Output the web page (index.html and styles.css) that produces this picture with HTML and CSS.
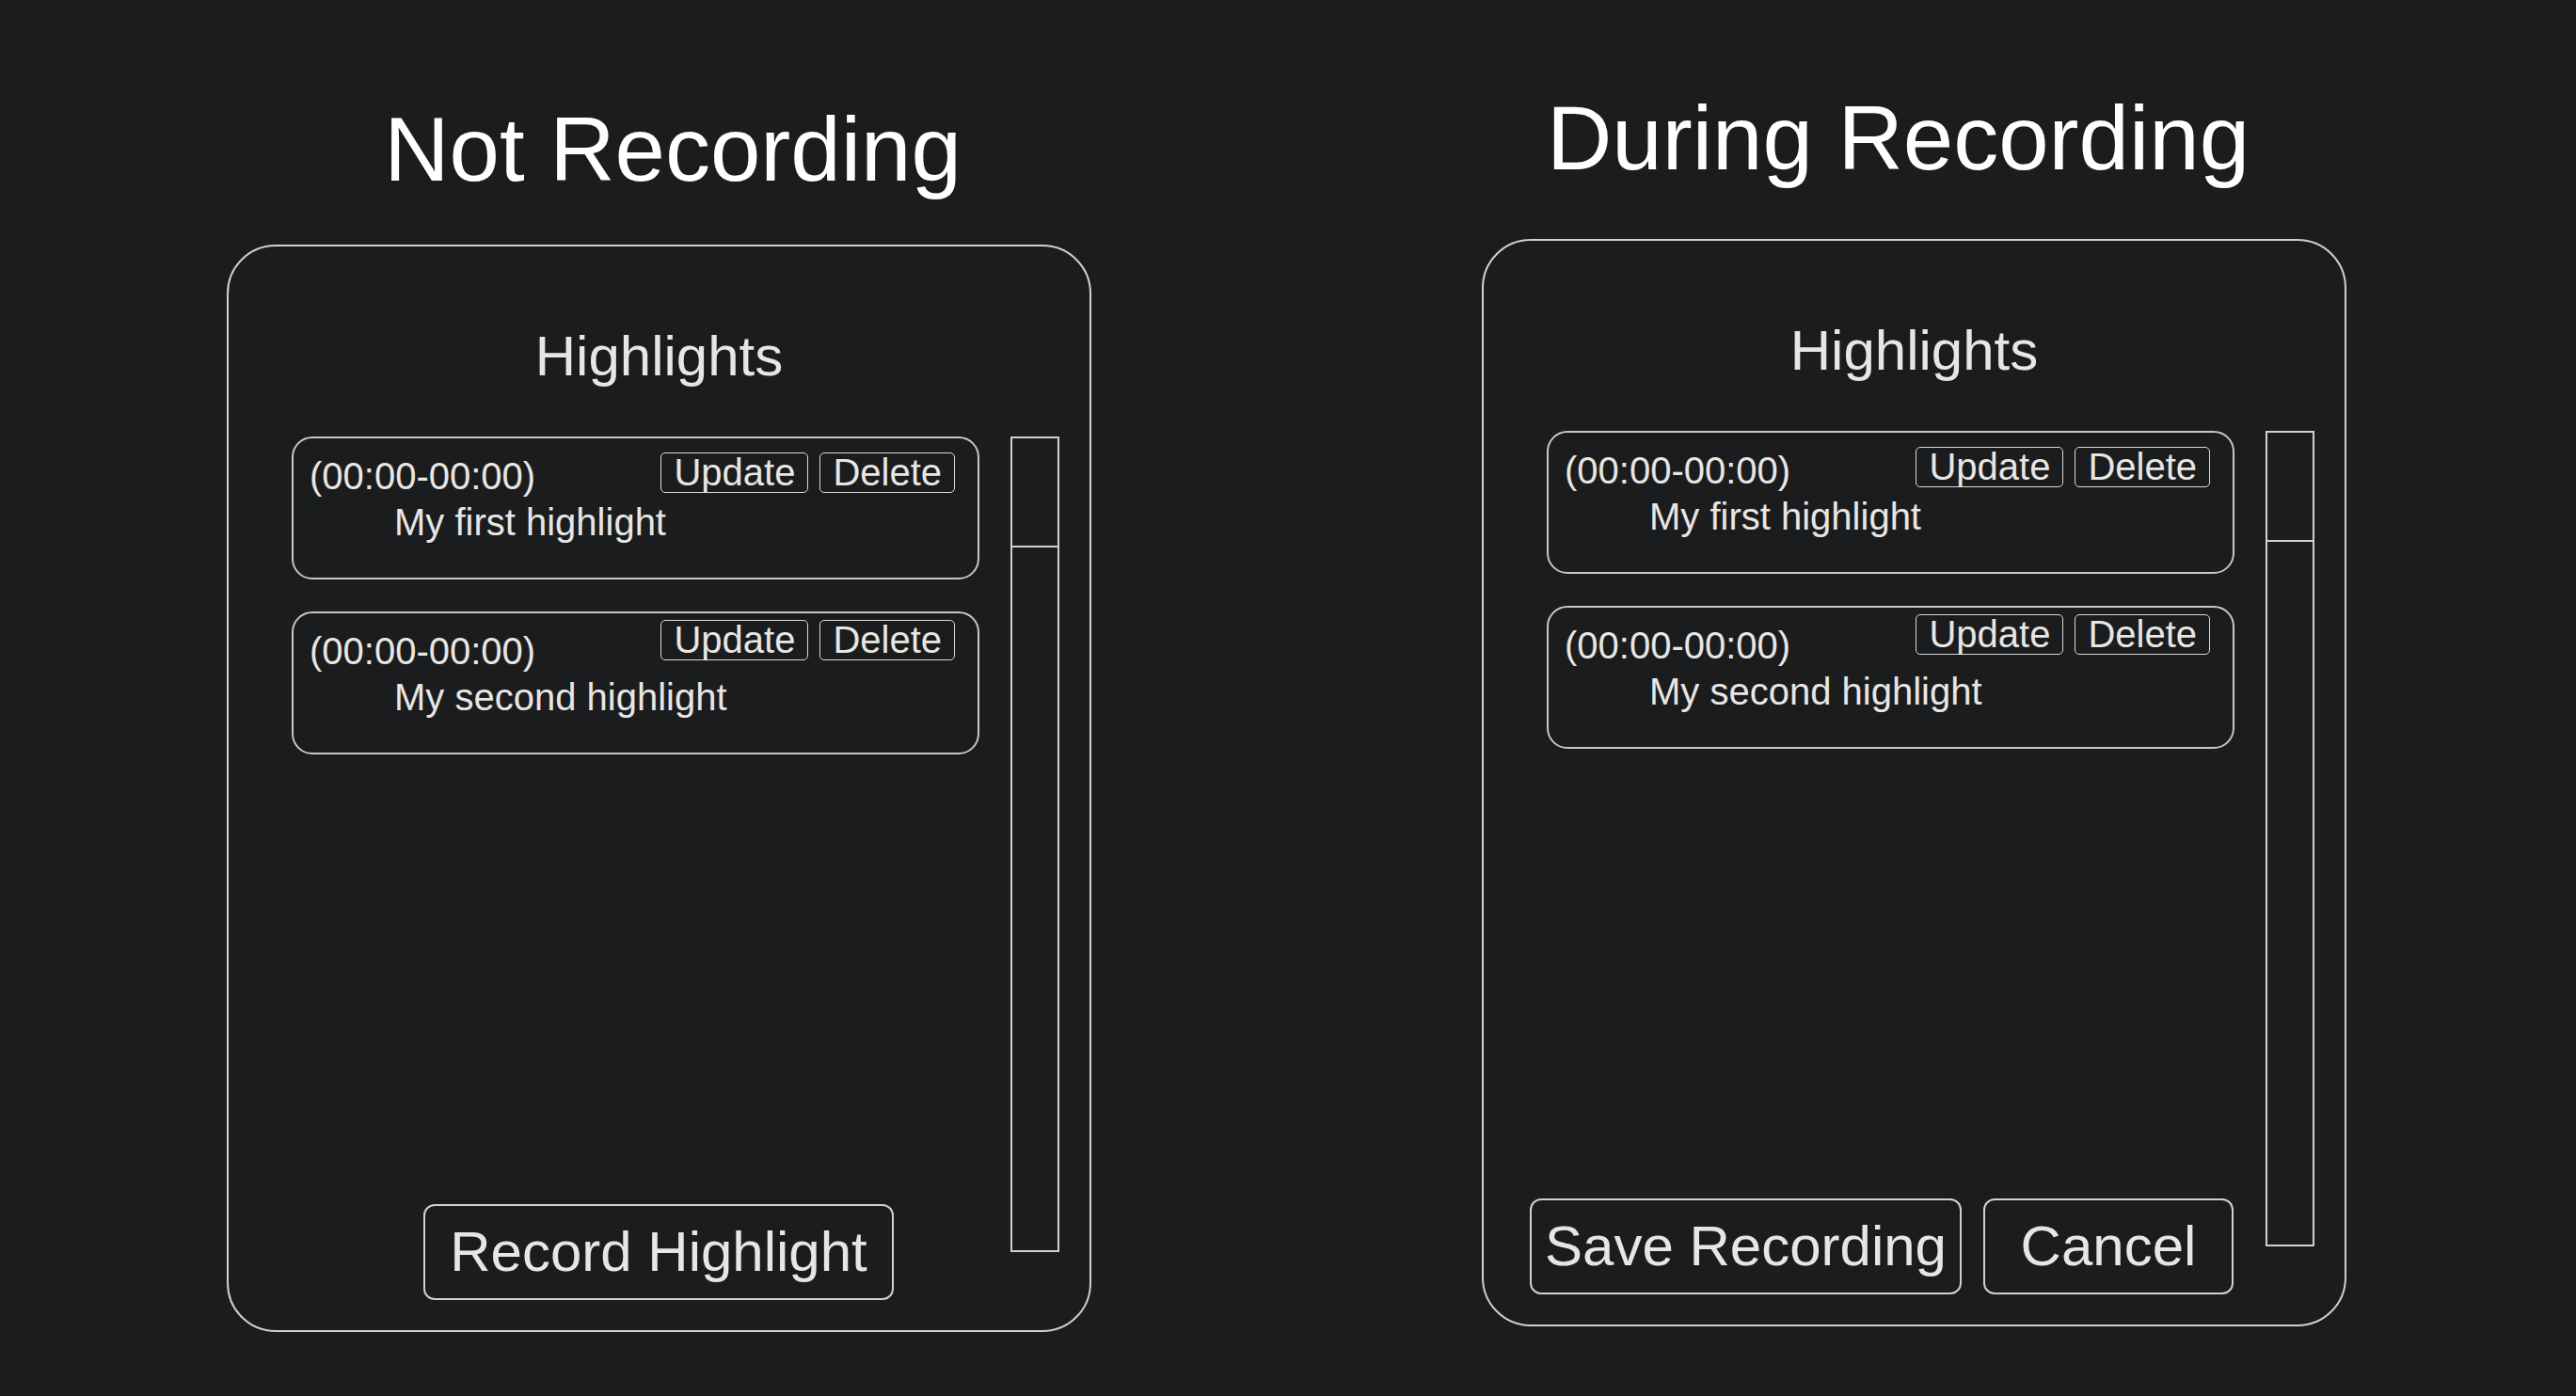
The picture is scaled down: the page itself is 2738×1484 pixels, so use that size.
FILE: index.html
```html
<!DOCTYPE html>
<html lang="en">
<head>
<meta charset="utf-8">
<title>Highlights states</title>
<link rel="stylesheet" href="styles.css">
</head>
<body>
<main class="page">
  <section class="state state--idle">
    <h1 class="state-title">Not Recording</h1>
    <div class="panel">
      <h2 class="panel-heading">Highlights</h2>
      <div class="panel-body">
        <div class="panel-main">
          <ul class="highlight-list">
            <li class="highlight">
              <div class="highlight-row">
                <span class="highlight-time">(00:00-00:00)</span>
                <div class="highlight-actions">
                  <button class="small-btn">Update</button>
                  <button class="small-btn">Delete</button>
                </div>
              </div>
              <p class="highlight-text">My first highlight</p>
            </li>
            <li class="highlight highlight--raised">
              <div class="highlight-row">
                <span class="highlight-time">(00:00-00:00)</span>
                <div class="highlight-actions">
                  <button class="small-btn">Update</button>
                  <button class="small-btn">Delete</button>
                </div>
              </div>
              <p class="highlight-text">My second highlight</p>
            </li>
          </ul>
          <div class="panel-footer panel-footer--idle">
            <button class="big-btn big-btn--record">Record Highlight</button>
          </div>
        </div>
        <div class="scrollbar"><div class="scrollbar-thumb"></div></div>
      </div>
    </div>
  </section>

  <section class="state state--rec">
    <h1 class="state-title">During Recording</h1>
    <div class="panel">
      <h2 class="panel-heading">Highlights</h2>
      <div class="panel-body">
        <div class="panel-main">
          <ul class="highlight-list">
            <li class="highlight">
              <div class="highlight-row">
                <span class="highlight-time">(00:00-00:00)</span>
                <div class="highlight-actions">
                  <button class="small-btn">Update</button>
                  <button class="small-btn">Delete</button>
                </div>
              </div>
              <p class="highlight-text">My first highlight</p>
            </li>
            <li class="highlight highlight--raised">
              <div class="highlight-row">
                <span class="highlight-time">(00:00-00:00)</span>
                <div class="highlight-actions">
                  <button class="small-btn">Update</button>
                  <button class="small-btn">Delete</button>
                </div>
              </div>
              <p class="highlight-text">My second highlight</p>
            </li>
          </ul>
          <div class="panel-footer panel-footer--rec">
            <button class="big-btn big-btn--save">Save Recording</button>
            <button class="big-btn big-btn--cancel">Cancel</button>
          </div>
        </div>
        <div class="scrollbar"><div class="scrollbar-thumb"></div></div>
      </div>
    </div>
  </section>
</main>
</body>
</html>
```

FILE: styles.css
```css
* {
  box-sizing: border-box;
}

html, body {
  margin: 0;
  padding: 0;
  background: #1b1c1e;
  width: 2738px;
  height: 1484px;
  overflow: hidden;
}

body {
  font-family: "Liberation Sans", Arial, sans-serif;
  color: #e8e6e3;
}

.page {
  display: flex;
  align-items: flex-start;
  padding-left: 241px;
}

.state {
  width: 919px;
  display: flex;
  flex-direction: column;
}

.state--idle {
  padding-top: 111px;
}

.state--rec {
  padding-top: 99px;
  margin-left: 415px;
}

.state-title {
  margin: 0;
  font-size: 96px;
  line-height: 96px;
  font-weight: normal;
  color: #ffffff;
  text-align: center;
  white-space: nowrap;
}

.state--idle .state-title {
  padding-left: 29px;
  margin-bottom: 53px;
}

.state--rec .state-title {
  padding-right: 34px;
  margin-bottom: 59px;
}

.panel {
  width: 919px;
  border: 2px solid #d2d0cc;
  border-radius: 52px;
  padding: 87px 0 32px;
}

.panel-heading {
  margin: 0 0 55px;
  font-size: 60px;
  line-height: 60px;
  font-weight: normal;
  text-align: center;
}

.panel-body {
  display: flex;
  align-items: flex-start;
  gap: 33px;
  padding: 0 32px 0 67px;
}

.panel-main {
  width: 731px;
  height: 918px;
  display: flex;
  flex-direction: column;
}

.highlight-list {
  list-style: none;
  margin: 0;
  padding: 0;
  display: flex;
  flex-direction: column;
  gap: 34px;
}

.highlight {
  height: 152px;
  border: 2px solid #c9c7c3;
  border-radius: 22px;
  padding: 15px 24px 0 17px;
  font-size: 40px;
}

.highlight-row {
  display: flex;
  justify-content: space-between;
  align-items: flex-start;
}

.highlight-time {
  margin-top: 2px;
  line-height: 46px;
  white-space: nowrap;
}

.highlight-actions {
  display: flex;
  gap: 12px;
}

.highlight--raised .highlight-actions {
  margin-top: -8px;
}

.small-btn {
  font-family: inherit;
  font-size: 40px;
  line-height: 40px;
  color: #e8e6e3;
  background: transparent;
  border: 1px solid #dcdad6;
  border-radius: 5px;
  padding: 0 13px 1px;
  margin: 0;
}

.highlight-text {
  margin: 3px 0 0;
  padding-left: 90px;
  line-height: 46px;
  white-space: nowrap;
}

.panel-footer {
  margin-top: auto;
  display: flex;
}

.panel-footer--idle {
  padding-left: 140px;
}

.panel-footer--rec {
  margin-left: -18px;
  gap: 23px;
}

.big-btn {
  font-family: inherit;
  font-size: 60px;
  line-height: 69px;
  color: #e8e6e3;
  background: transparent;
  border: 2px solid #d2d0cc;
  border-radius: 12px;
  padding: 14px 0 15px;
  margin: 0;
  text-align: center;
  white-space: nowrap;
}

.big-btn--record {
  width: 500px;
}

.big-btn--save {
  width: 459px;
}

.big-btn--cancel {
  width: 266px;
}

.scrollbar {
  width: 52px;
  height: 867px;
  border: 2px solid #d2d0cc;
}

.scrollbar-thumb {
  height: 116px;
  border-bottom: 2px solid #d2d0cc;
}
```
